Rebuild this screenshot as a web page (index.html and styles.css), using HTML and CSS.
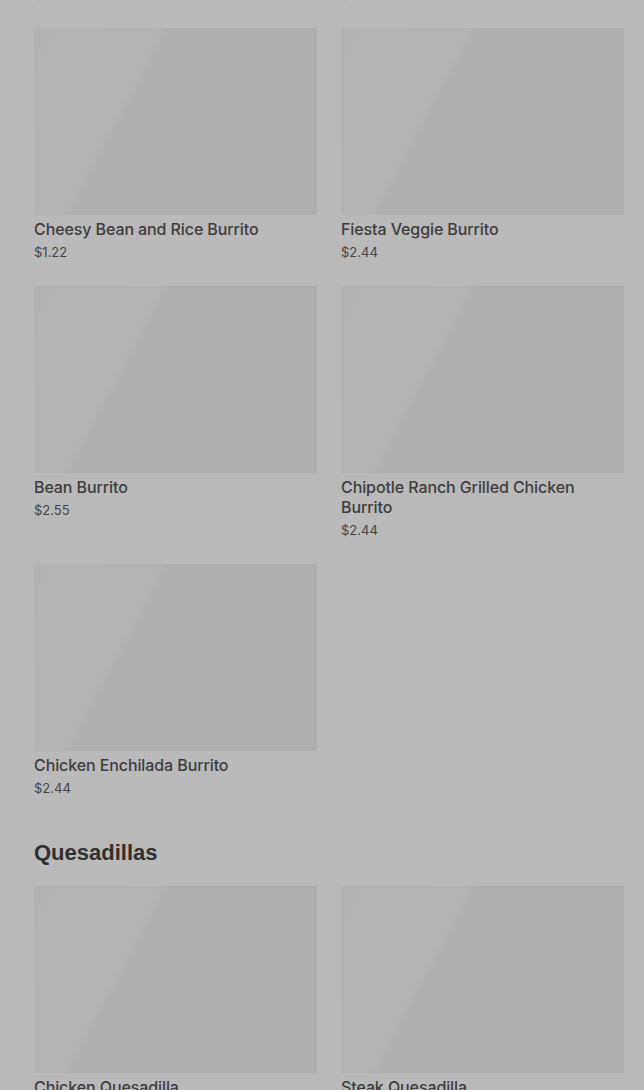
FILE: index.html
```html
<!DOCTYPE html>
<html>
<head>
<meta charset="utf-8">
<link rel="stylesheet" href="styles.css">
</head>
<body>
<main class="menu">
  <section class="section section-first">
    <div class="grid">
      <article class="card"><div class="thumb"></div><div class="name">Bean and Cheese Burrito</div><div class="price">$1.22</div></article>
      <article class="card"><div class="thumb"></div><div class="name">Beefy Burrito</div><div class="price">$2.44</div></article>
      <article class="card"><div class="thumb"></div><div class="name">Cheesy Bean and Rice Burrito</div><div class="price">$1.22</div></article>
      <article class="card"><div class="thumb"></div><div class="name">Fiesta Veggie Burrito</div><div class="price">$2.44</div></article>
      <article class="card"><div class="thumb"></div><div class="name">Bean Burrito</div><div class="price">$2.55</div></article>
      <article class="card"><div class="thumb"></div><div class="name">Chipotle Ranch Grilled Chicken Burrito</div><div class="price">$2.44</div></article>
      <article class="card"><div class="thumb"></div><div class="name">Chicken Enchilada Burrito</div><div class="price">$2.44</div></article>
    </div>
  </section>
  <section class="section">
    <h2 class="section-title">Quesadillas</h2>
    <div class="grid">
      <article class="card"><div class="thumb"></div><div class="name">Chicken Quesadilla</div><div class="price">$4.49</div></article>
      <article class="card"><div class="thumb"></div><div class="name">Steak Quesadilla</div><div class="price">$4.99</div></article>
    </div>
  </section>
</main>
</body>
</html>
```
FILE: styles.css
```css
html, body {
  margin: 0;
  padding: 0;
  background: #bababa;
  overflow: hidden;
}

.menu {
  padding: 0 20px 0 34px;
  margin-top: -230px;
  font-family: Inter, "Liberation Sans", Arial, sans-serif;
  color: #3f3f3f;
}

.grid {
  display: grid;
  grid-template-columns: 283px 283px;
  column-gap: 24px;
  row-gap: 24px;
  align-items: start;
}

.thumb {
  height: 187px;
  background: linear-gradient(118deg, #b3b3b3 0%, #b4b4b4 33%, #afafaf 36%, #afafaf 100%);
}

.name {
  margin-top: 4px;
  font-size: 16px;
  font-weight: 500;
  line-height: 20px;
  letter-spacing: -0.1px;
  color: #3d3d3d;
}

.price {
  margin-top: 3px;
  font-size: 13px;
  line-height: 20px;
  color: #454545;
}

.section-title {
  margin: 41px 0 19px;
  font-family: "Liberation Sans", Arial, sans-serif;
  font-size: 22px;
  font-weight: 700;
  line-height: 28px;
  color: #303030;
}
```
